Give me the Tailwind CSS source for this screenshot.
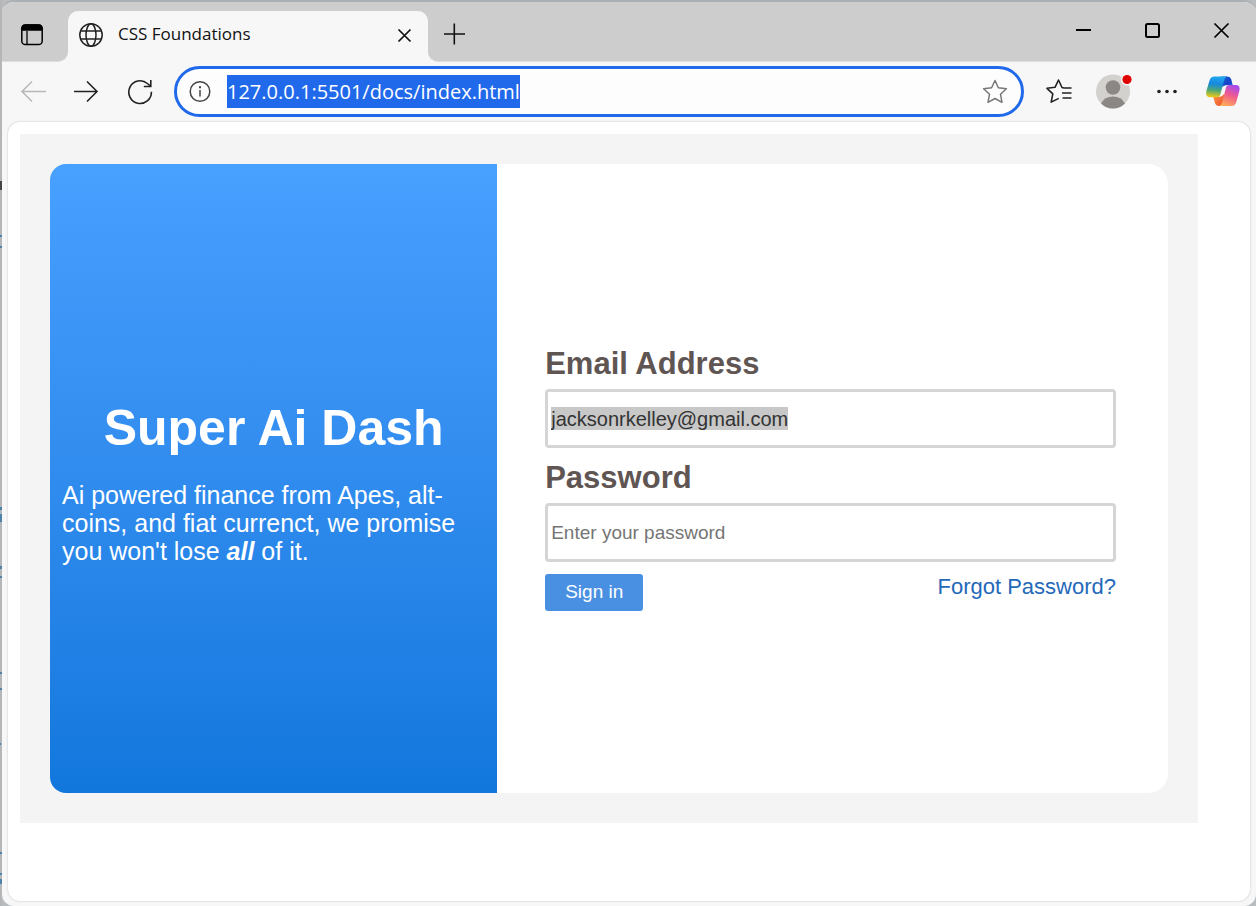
<!DOCTYPE html>
<html lang="en">
<head>
<meta charset="utf-8">
<meta name="viewport" content="width=device-width, initial-scale=1">
<title>CSS Foundations</title>
<script src="https://cdn.jsdelivr.net/npm/@tailwindcss/browser@4"></script>
</head>
<body class="flex min-h-screen bg-[#b9bcbf] font-['Liberation_Sans',Arial,sans-serif]">
<!-- Sliver of the desktop beside the window -->
<svg class="w-[2px] shrink-0 self-stretch bg-[#b4b6b8]" aria-hidden="true"><g fill="#4b83ab"><rect y="235" width="2" height="2"/><rect y="246" width="2" height="2"/><rect y="507" width="2" height="3"/><rect y="514" width="2" height="8"/><rect y="566" width="2" height="3"/><rect y="576" width="2" height="2"/><rect y="672" width="2" height="2"/><rect y="688" width="2" height="2"/><rect y="743" width="1" height="2"/><rect y="852" width="2" height="2"/><rect y="873" width="2" height="2"/><rect y="879" width="2" height="5"/></g><rect y="181" width="2" height="9" fill="#444"/></svg>
<div class="flex min-w-0 flex-1 flex-col overflow-hidden rounded-xl border-t-2 border-[#abb0b5] bg-[#f7f7f7]">

  <header class="flex h-15 shrink-0">
    <div class="flex w-[66px] items-center rounded-br-[10px] border-b border-[#dedede] bg-[#cdcdcd] pt-[6px] pl-[18px]">
      <button type="button" aria-label="Tab actions" class="block">
        <svg width="24" height="24" viewBox="0 0 24 24" fill="none" stroke="#000" stroke-width="1.500"><rect x="1.800" y="2" width="20.400" height="19.600" rx="3.600"/><path d="M2 5.600Q2 2 5.600 2h12.800Q22 2 22 5.600V7H2z" fill="#000"/><path d="M7 8v14" stroke-width="1.300"/></svg>
      </button>
    </div>
    <div class="w-[360px] bg-[#cdcdcd] pt-[9px]">
      <div class="flex h-full items-center rounded-t-[10px] bg-[#f7f7f7] pr-3 pb-1 pl-[10px]">
        <svg class="shrink-0" width="26" height="26" viewBox="0 0 26 26" fill="none" stroke="#222" stroke-width="1.500"><circle cx="13" cy="13" r="11.200"/><ellipse cx="13" cy="13" rx="5" ry="11.200"/><path d="M3 9h20M3 17h20"/></svg>
        <span class="ml-[14px] flex-1 pb-[2px] font-['Open_Sans','Noto_Sans',sans-serif] text-[17px] leading-6 text-[#111]">CSS Foundations</span>
        <button type="button" aria-label="Close tab" class="block"><svg width="24" height="24" viewBox="0 0 24 24" stroke="#111" stroke-width="1.700"><path d="M6.500 6.500l12 12M18.500 6.500L6.500 18.500"/></svg></button>
      </div>
    </div>
    <div class="flex flex-1 items-center rounded-bl-[10px] border-b border-[#dedede] bg-[#cdcdcd] pl-[14px]">
      <button type="button" aria-label="New tab" class="mt-1 block"><svg width="24" height="24" viewBox="0 0 24 24" stroke="#111" stroke-width="1.600"><path d="M12.300 1.500v21M2 12h21"/></svg></button>
      <div class="ml-auto flex gap-[45px] pr-[23px] pb-px">
        <button type="button" aria-label="Minimize" class="block"><svg width="24" height="24" viewBox="0 0 24 24" stroke="#000" stroke-width="2"><path d="M5 11h15"/></svg></button>
        <button type="button" aria-label="Maximize" class="block"><svg width="24" height="24" viewBox="0 0 24 24" fill="none" stroke="#000" stroke-width="2"><rect x="6" y="5" width="13" height="13" rx="1.500"/></svg></button>
        <button type="button" aria-label="Close" class="block"><svg width="24" height="24" viewBox="0 0 24 24" stroke="#000" stroke-width="1.700"><path d="M5.500 4.500l14 14M19.500 4.500L5.500 18.500"/></svg></button>
      </div>
    </div>
  </header>

  <nav class="flex h-15 shrink-0 items-center pb-[2px] pl-4" aria-label="Browser toolbar">
    <div class="flex gap-[26px]">
      <button type="button" aria-label="Back" class="block"><svg width="28" height="28" viewBox="0 0 28 28" fill="none" stroke="#b7b7b7" stroke-width="1.500"><path d="M14 4.500L4 14.500l10 10M4 14.500h24"/></svg></button>
      <button type="button" aria-label="Forward" class="block"><svg width="28" height="28" viewBox="0 0 28 28" fill="none" stroke="#222" stroke-width="1.600"><path d="M15 4.500L25 14.500 15 24.500M25.500 14.500H2"/></svg></button>
      <button type="button" aria-label="Refresh" class="block"><svg width="28" height="28" viewBox="0 0 28 28" fill="none" stroke="#222" stroke-width="1.600"><path d="M25.400 14.800A11.300 11.300 0 1 1 21.400 6.500l3 2.500M24.800 3v6.500h-7"/></svg></button>
    </div>
    <div class="ml-5 flex h-[51px] min-w-0 flex-1 items-center rounded-full border-3 border-[#2169eb] bg-[#fdfdfd] pr-[13px] pl-[11px]">
      <svg class="shrink-0" width="24" height="24" viewBox="0 0 24 24" fill="none" stroke="#444" stroke-width="1.500"><circle cx="12" cy="12.500" r="9.800"/><path d="M12 11v6.500"/><path d="M12 7.300v2" stroke-width="2"/></svg>
      <input type="text" aria-label="Address" value="127.0.0.1:5501/docs/index.html" class="ml-[15px] h-[33px] field-sizing-content bg-[#2169eb] font-['Open_Sans','Noto_Sans',sans-serif] text-[20px] leading-8 text-white outline-none">
      <button type="button" aria-label="Add to favorites" class="ml-auto block"><svg width="26" height="26" viewBox="0 0 26 26" fill="none" stroke="#777" stroke-width="1.500" stroke-linejoin="round"><path d="M13 2.500l3.400 7.200 8 1.100-5.900 5.500 1.500 8L13 20.500l-7 3.800 1.500-8-5.900-5.500 8-1.100z"/></svg></button>
    </div>
    <div class="flex shrink-0 items-center pr-[15px] pl-[21px]">
      <button type="button" aria-label="Favorites" class="block"><svg width="28" height="28" viewBox="0 0 28 28" fill="none" stroke="#222" stroke-width="1.600" stroke-linejoin="round"><path d="M26.500 11h-7.500l-2-.500-3.500-7.500L10 10.300l-8 1 5.800 5.500-1.600 8.300 7.500-3.700M17 16h9.500M17.500 21h9"/></svg></button>
      <button type="button" aria-label="Profile" class="ml-[22px] block"><svg width="38" height="36" viewBox="0 0 38 36"><circle cx="18" cy="18.500" r="17" fill="#d3d1ce"/><circle cx="18" cy="14.500" r="7.300" fill="#8b8784"/><path d="M6 30.600q3.500-7.100 12-7.100t12 7.100A17 17 0 0 1 6 30.600z" fill="#8b8784"/><circle cx="32" cy="6.500" r="6" fill="#f7f7f7"/><circle cx="32" cy="6.500" r="4.600" fill="#df0000"/></svg></button>
      <button type="button" aria-label="Settings and more" class="ml-[20px] block"><svg width="28" height="28" viewBox="0 0 28 28" fill="#222"><circle cx="6" cy="14.500" r="1.800"/><circle cx="14" cy="14.500" r="1.800"/><circle cx="22" cy="14.500" r="1.800"/></svg></button>
      <button type="button" aria-label="Copilot" class="ml-[24px] block">
        <svg width="36" height="32" viewBox="0 0 36 32">
          <defs>
            <linearGradient id="leaf" x1=".4" y1="0" x2=".3" y2="1"><stop offset="0" stop-color="#22a7ee"/><stop offset=".35" stop-color="#1688df"/><stop offset=".65" stop-color="#4aa678"/><stop offset="1" stop-color="#f3cb13"/></linearGradient>
            <linearGradient id="petal" x1=".7" y1="0" x2=".3" y2="1"><stop offset="0" stop-color="#a64af0"/><stop offset=".45" stop-color="#ef598f"/><stop offset="1" stop-color="#ffae57"/></linearGradient>
            <linearGradient id="fold" x1="0" y1="0" x2="1" y2="1"><stop offset="0" stop-color="#1268d5"/><stop offset=".6" stop-color="#1740c8"/><stop offset="1" stop-color="#267ce0"/></linearGradient>
            <linearGradient id="base" x1="0" y1="0" x2="1" y2="1"><stop offset="0" stop-color="#ff9a43"/><stop offset="1" stop-color="#e94830"/></linearGradient>
          </defs>
          <path d="M16 1.500h6.500q2.800 0 3.700 2.800L27.700 10h-4.500q-5 0-7 3z" fill="url(#fold)"/>
          <path d="M20 31h-6.500q-2.500 0-3.500-2.800L8.300 22H13q4 0 6-3z" fill="url(#base)"/>
          <path d="M9.500 1.500H22.500q-2.500.5-3.400 4L15.500 19q-.8 3.200-3.500 3.200H5.500q-5.500 0-4.200-6L4.500 5.500Q5.700 1.500 9.500 1.500z" fill="url(#leaf)"/>
          <path d="M26.500 31H13.800q2.400-.5 3.400-4l3.600-13.800q.8-3.200 3.700-3.200h6q5.200 0 3.900 5.700L31.300 27Q30.100 31 26.500 31z" fill="url(#petal)"/>
        </svg>
      </button>
    </div>
  </nav>

  <main class="mr-[6px] mb-[5px] ml-[6px] flex-1 rounded-xl bg-white pt-3 pr-[52px] pl-3 shadow-[0_0_2px_rgba(0,0,0,0.25)]">
    <div class="bg-[#f4f4f4] p-[30px]">
      <div class="flex min-h-[629px] overflow-hidden rounded-l-[16px] rounded-r-[20px] bg-white">
        <section class="flex w-2/5 flex-col justify-center bg-linear-to-b from-[#48a0ff] to-[#1177dd] px-3 pt-2 text-white">
          <h1 class="text-center text-[50px] leading-[57px] font-bold">Super Ai Dash</h1>
          <p class="mt-6 text-[25px] leading-7">Ai powered finance from Apes, alt-coins, and fiat currenct, we promise you won't lose <em class="font-bold">all</em> of it.</p>
        </section>
        <form class="flex flex-1 flex-col justify-center pr-[52px] pl-12">
          <label for="email" class="text-[31px] leading-9 font-bold text-[#5f5553]">Email Address</label>
          <div class="mt-[7px] flex h-[59px] items-center rounded-[4px] border-3 border-[#d5d5d5] px-[3px]">
            <input id="email" type="email" value="jacksonrkelley@gmail.com" class="h-[23px] max-w-full field-sizing-content bg-[#c8c8c8] text-[20px] text-[#333] outline-none">
          </div>
          <label for="password" class="mt-3 text-[31px] leading-9 font-bold text-[#5f5553]">Password</label>
          <input id="password" type="password" placeholder="Enter your password" class="mt-[7px] h-[59px] rounded-[4px] border-3 border-[#d5d5d5] px-[3px] text-[19px] outline-none placeholder:text-[#757575]">
          <div class="mt-3 flex items-start justify-between">
            <button type="submit" class="h-[37px] rounded-[3px] bg-[#4a90e2] px-5 text-[19px] text-white">Sign in</button>
            <a href="#" class="text-[22px] leading-[25px] text-[#2469b9]">Forgot Password?</a>
          </div>
        </form>
      </div>
    </div>
  </main>
</div>
</body>
</html>
